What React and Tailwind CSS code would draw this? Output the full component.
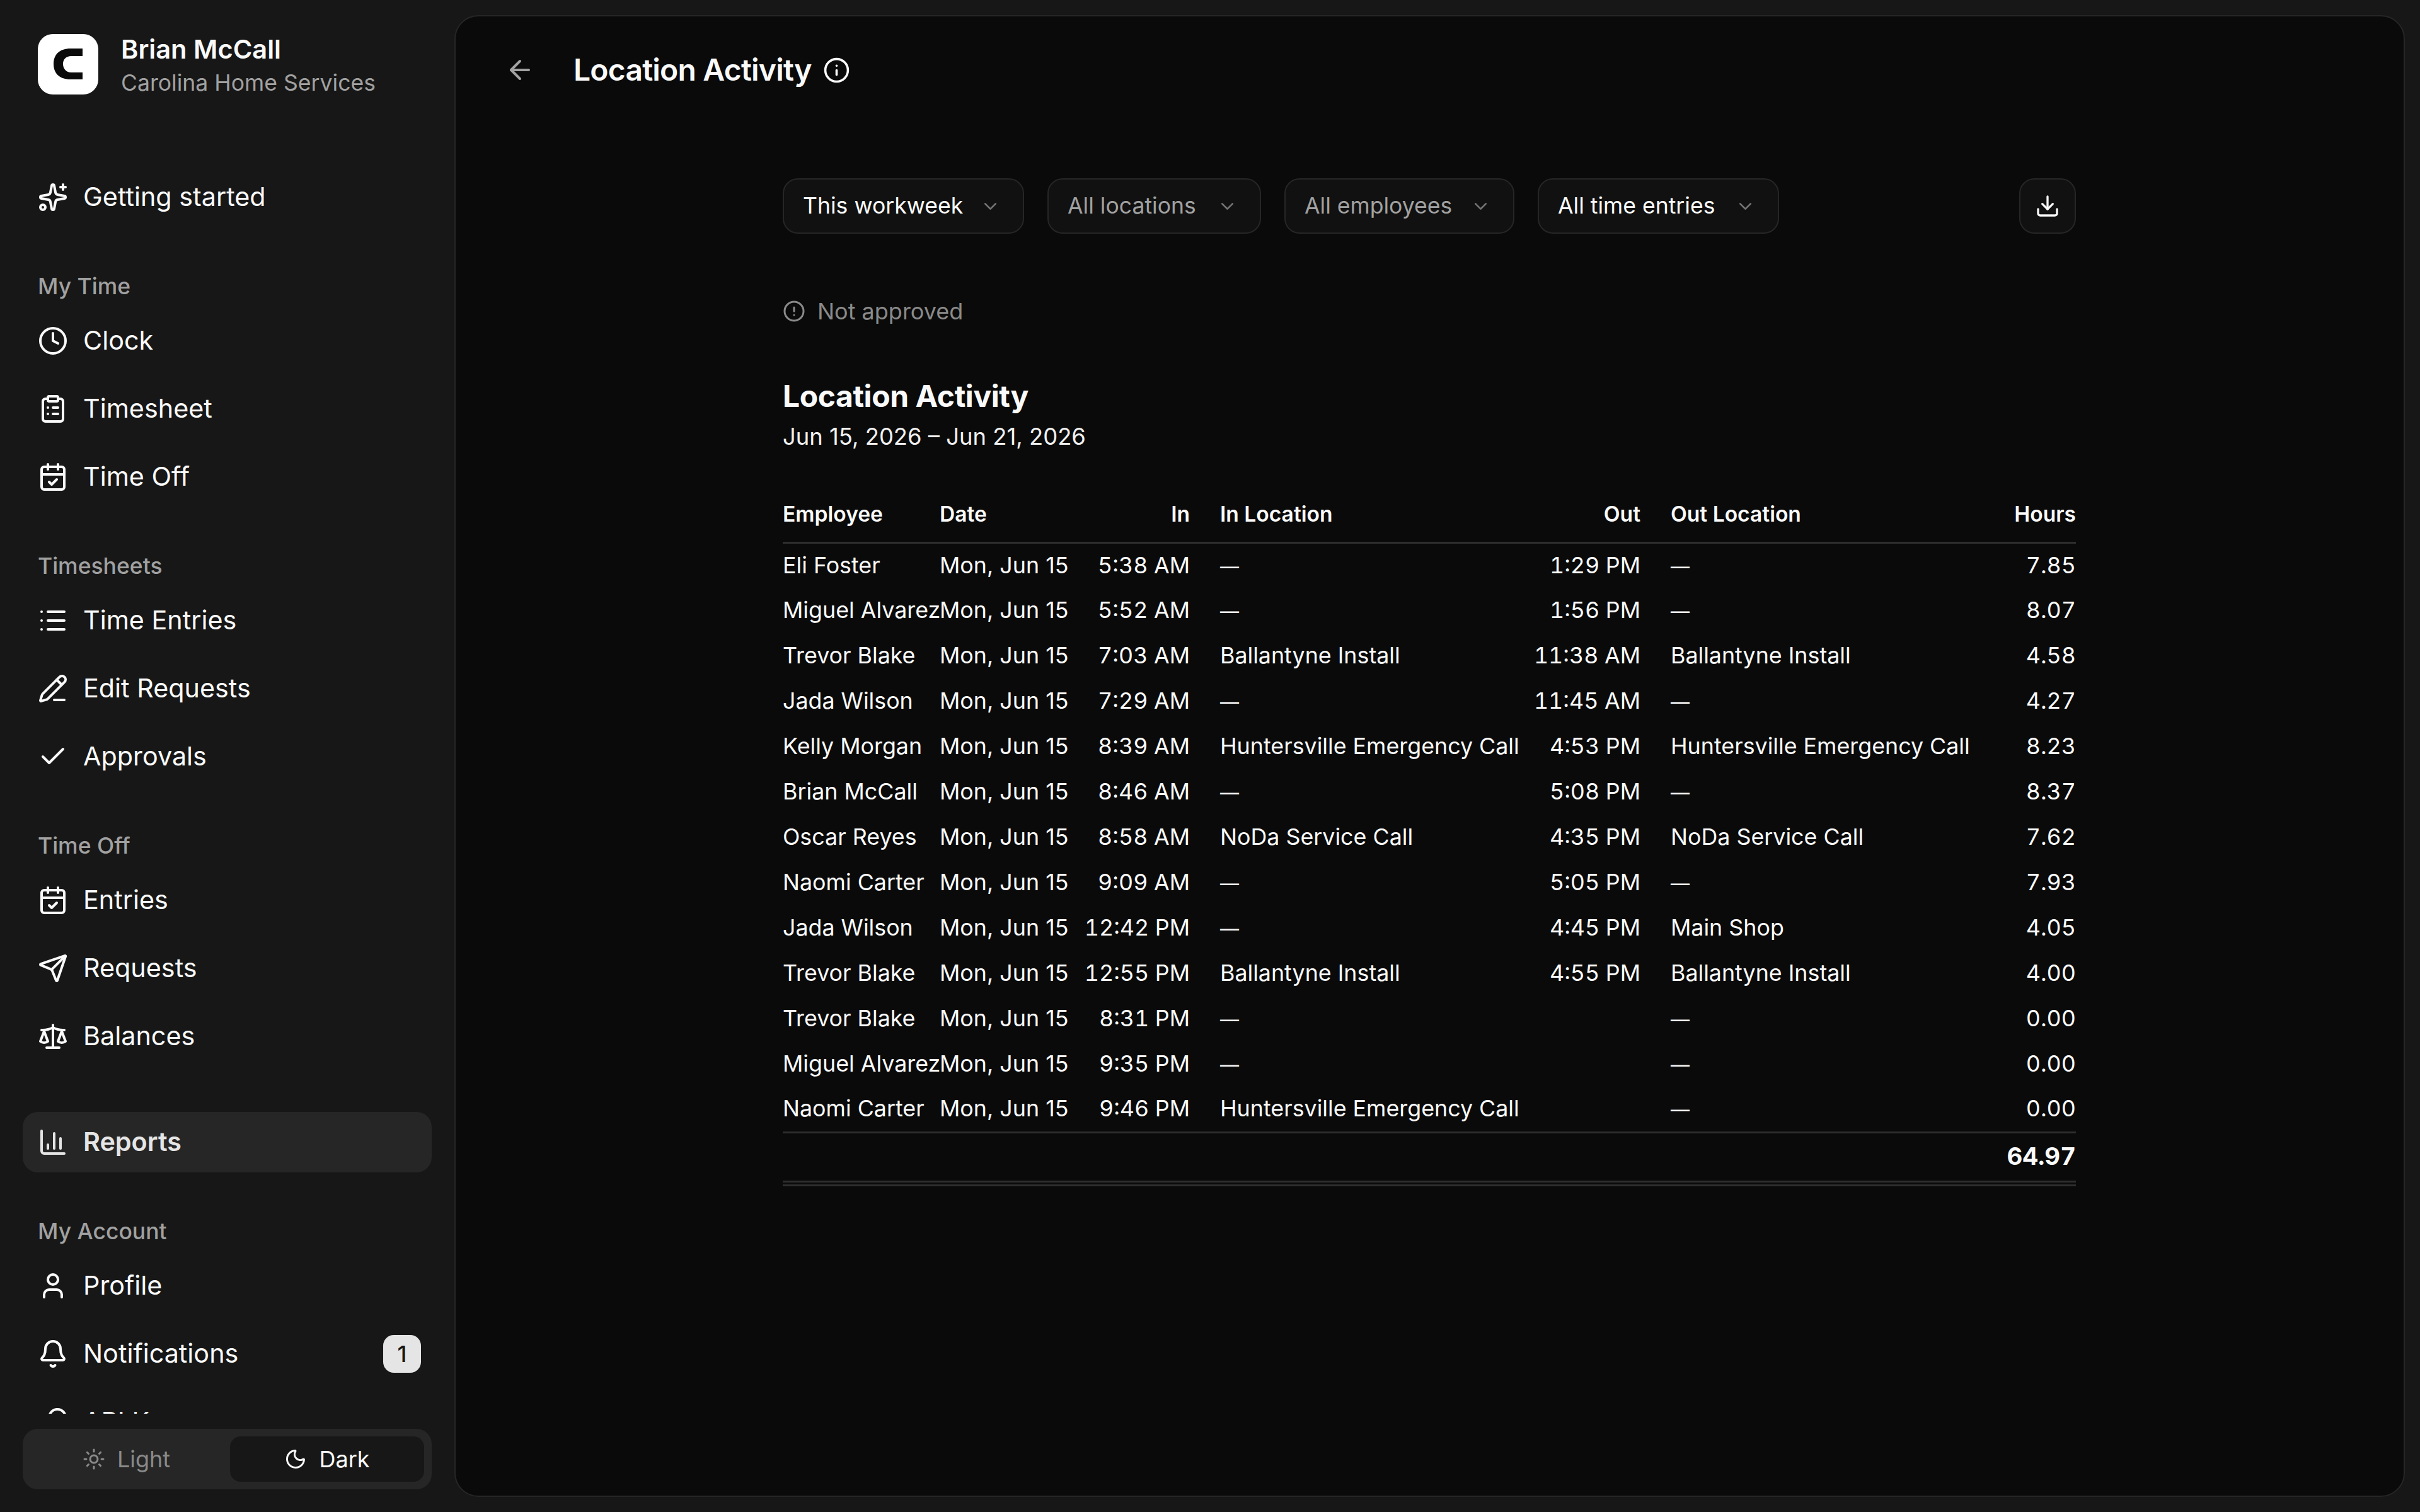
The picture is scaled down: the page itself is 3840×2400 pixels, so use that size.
import {
  ArrowLeft, Bell, CalendarCheck, Check, ChevronDown, CircleAlert, ClipboardList, Clock, Download,
  Info, KeyRound, List, Moon, PencilLine, Scale, Send, Sparkles, Sun, User,
} from 'lucide-react';

const font = 'font-["Inter","Liberation_Sans",sans-serif]';

const rows = [
  ['Eli Foster', '5:38 AM', '—', '1:29 PM', '—', '7.85'],
  ['Miguel Alvarez', '5:52 AM', '—', '1:56 PM', '—', '8.07'],
  ['Trevor Blake', '7:03 AM', 'Ballantyne Install', '11:38 AM', 'Ballantyne Install', '4.58'],
  ['Jada Wilson', '7:29 AM', '—', '11:45 AM', '—', '4.27'],
  ['Kelly Morgan', '8:39 AM', 'Huntersville Emergency Call', '4:53 PM', 'Huntersville Emergency Call', '8.23'],
  ['Brian McCall', '8:46 AM', '—', '5:08 PM', '—', '8.37'],
  ['Oscar Reyes', '8:58 AM', 'NoDa Service Call', '4:35 PM', 'NoDa Service Call', '7.62'],
  ['Naomi Carter', '9:09 AM', '—', '5:05 PM', '—', '7.93'],
  ['Jada Wilson', '12:42 PM', '—', '4:45 PM', 'Main Shop', '4.05'],
  ['Trevor Blake', '12:55 PM', 'Ballantyne Install', '4:55 PM', 'Ballantyne Install', '4.00'],
  ['Trevor Blake', '8:31 PM', '—', '', '—', '0.00'],
  ['Miguel Alvarez', '9:35 PM', '—', '', '—', '0.00'],
  ['Naomi Carter', '9:46 PM', 'Huntersville Emergency Call', '', '—', '0.00'],
];

function ReportsIcon() {
  return (
    <svg viewBox="0 0 24 24" fill="none" stroke="currentColor" strokeWidth="2" strokeLinecap="round" strokeLinejoin="round" className="size-[48px] shrink-0">
      <path d="M3 3v16a2 2 0 0 0 2 2h16" />
      <path d="M8 17v-3" />
      <path d="M13 17V5" />
      <path d="M18 17V9" />
    </svg>
  );
}

function NavItem({ icon: Icon, label, badge }) {
  return (
    <div className="flex h-[96px] items-center gap-[24px] px-[24px] text-[41.3px] text-[#fafafa]">
      <Icon className="size-[48px] shrink-0" />
      <span>{label}</span>
      {badge && (
        <span className="ml-auto -mr-[7px] flex size-[60px] items-center justify-center rounded-[17px] bg-[#e5e5e5] text-[36px] font-medium text-[#171717]">
          {badge}
        </span>
      )}
    </div>
  );
}

function NavGroup({ title, children }) {
  return (
    <div className="mt-[70px]">
      <div className="flex h-[48px] items-center px-[24px] text-[35.5px] font-medium text-[#a1a1a1]">{title}</div>
      <div className="mt-[14px] flex flex-col gap-[12px]">{children}</div>
    </div>
  );
}

function FilterButton({ label, width, muted }) {
  return (
    <button className={`flex h-[88px] items-center justify-between rounded-[24px] border-[2.4px] border-[#262626] bg-[#111111] pl-[30px] pr-[35px] text-[35.6px] ${muted ? 'text-[#a1a1a1]' : 'text-[#fafafa]'} ${width}`}>
      <span>{label}</span>
      <ChevronDown className="size-[33px] text-[#737373]" />
    </button>
  );
}

// the dash for an empty location is narrower than Inter's em dash at body size
function LocationCell({ value }) {
  return (
    <td className="pl-[48px]">
      {value === '—' ? <span className="text-[30px]">—</span> : value}
    </td>
  );
}

export default function App() {
  return (
    <div className={`flex h-[2400px] w-[3840px] overflow-hidden bg-[#171717] ${font}`}>
      {/* sidebar */}
      <aside className="flex h-full w-[721px] shrink-0 flex-col px-[36px] pb-[36px]">
        <div className="flex items-start gap-[36px] px-[24px] pt-[54px]">
          <div className="flex size-[96px] items-center justify-center rounded-[24px] bg-white">
            <svg viewBox="0 0 96 96" className="size-[96px]">
              <path d="M71 23H52C35 23 25 32 25 47.5C25 63 35 72 52 72H71V61H53C45 61 40 55 40 47.5C40 40 45 35 53 35H71Z" fill="#0a0a0a" />
            </svg>
          </div>
          <div className="flex flex-col">
            <span className="text-[41.6px] leading-[48px] font-semibold text-[#fafafa]">Brian McCall</span>
            <span className="mt-[6px] text-[35.6px] leading-[48px] text-[#a1a1a1]">Carolina Home Services</span>
          </div>
        </div>

        <div className="mt-[109px] min-h-0 flex-1 overflow-hidden">
          <NavItem icon={Sparkles} label="Getting started" />
          <NavGroup title="My Time">
            <NavItem icon={Clock} label="Clock" />
            <NavItem icon={ClipboardList} label="Timesheet" />
            <NavItem icon={CalendarCheck} label="Time Off" />
          </NavGroup>
          <NavGroup title="Timesheets">
            <NavItem icon={List} label="Time Entries" />
            <NavItem icon={PencilLine} label="Edit Requests" />
            <NavItem icon={Check} label="Approvals" />
          </NavGroup>
          <NavGroup title="Time Off">
            <NavItem icon={CalendarCheck} label="Entries" />
            <NavItem icon={Send} label="Requests" />
            <NavItem icon={Scale} label="Balances" />
          </NavGroup>
          <div className="mt-[72px] flex h-[96px] items-center gap-[24px] rounded-[24px] bg-[#262626] px-[24px] text-[41.3px] font-semibold text-[#e5e5e5]">
            <ReportsIcon />
            <span>Reports</span>
          </div>
          <NavGroup title="My Account">
            <NavItem icon={User} label="Profile" />
            <NavItem icon={Bell} label="Notifications" badge="1" />
            <NavItem icon={KeyRound} label="API Keys" />
          </NavGroup>
        </div>

        <div className="mt-[24px] flex h-[96px] shrink-0 items-center rounded-[24px] bg-[#262626] p-[12px] text-[36px]">
          <div className="flex h-[72px] flex-1 items-center justify-center gap-[19px] pr-[12px] text-[#8a8a8a]">
            <Sun className="size-[36px]" />
            Light
          </div>
          <div className="flex h-[72px] w-[308px] items-center justify-center gap-[19px] rounded-[17px] bg-[#171717] text-[#fafafa]">
            <Moon className="size-[36px]" />
            Dark
          </div>
        </div>
      </aside>

      {/* main panel */}
      <main className="my-[24px] mr-[24px] flex-1 rounded-[38px] border-[2.4px] border-[#262626] bg-[#0a0a0a]">
        <header className="flex h-[170px] items-center pl-[78px]">
          <ArrowLeft className="size-[48px] text-[#a1a1a1]" />
          <h1 className="ml-[61px] text-[48px] font-semibold tracking-[-0.8px] text-[#fafafa]">Location Activity</h1>
          <Info className="ml-[18px] size-[43px] text-[#fafafa]" />
        </header>

        <div className="ml-[519px] w-[2052px]">
          <div className="mt-[87px] flex items-center gap-[37px]">
            <FilterButton label="This workweek" width="w-[383px]" />
            <FilterButton label="All locations" width="w-[339px]" muted />
            <FilterButton label="All employees" width="w-[365px]" muted />
            <FilterButton label="All time entries" width="w-[383px]" />
            <button className="ml-auto flex h-[88px] w-[90px] items-center justify-center rounded-[24px] border-[2.4px] border-[#262626] bg-[#111111] text-[#fafafa]">
              <Download className="size-[40px]" />
            </button>
          </div>

          <div className="mt-[101px] flex h-[44px] items-center gap-[19px] text-[36px] text-[#8a8a8a]">
            <CircleAlert className="size-[36px]" />
            Not approved
          </div>

          <h2 className="mt-[83px] text-[48px] leading-[60px] font-bold tracking-[-0.43px] text-[#fafafa]">Location Activity</h2>
          <p className="mt-[8px] text-[36.4px] leading-[52px] text-[#f0f0f0]">Jun 15, 2026 – Jun 21, 2026</p>

          <table className="mt-[54px] w-full table-fixed border-collapse text-[35.8px] whitespace-nowrap text-[#fafafa]">
            <colgroup>
              <col className="w-[249px]" />
              <col className="w-[200px]" />
              <col className="w-[197px]" />
              <col className="w-[512px]" />
              <col className="w-[203px]" />
              <col className="w-[497px]" />
              <col className="w-[194px]" />
            </colgroup>
            <thead>
              <tr className="h-[88px] border-b-[3px] border-[#2e2e2e] align-bottom text-[33.6px] font-semibold">
                <th className="pb-[18px] text-left font-semibold">Employee</th>
                <th className="pb-[18px] text-left font-semibold">Date</th>
                <th className="pb-[18px] text-right font-semibold">In</th>
                <th className="pb-[18px] pl-[48px] text-left font-semibold">In Location</th>
                <th className="pb-[18px] text-right font-semibold">Out</th>
                <th className="pb-[18px] pl-[48px] text-left font-semibold">Out Location</th>
                <th className="pb-[18px] text-right font-semibold">Hours</th>
              </tr>
            </thead>
            <tbody>
              {rows.map((r, i) => (
                <tr key={i} className="h-[72px]">
                  <td>{r[0]}</td>
                  <td>Mon, Jun 15</td>
                  <td className="text-right tabular-nums">{r[1]}</td>
                  <LocationCell value={r[2]} />
                  <td className="text-right tabular-nums">{r[3]}</td>
                  <LocationCell value={r[4]} />
                  <td className="text-right tabular-nums">{r[5]}</td>
                </tr>
              ))}
            </tbody>
            <tfoot>
              <tr className="h-[78px] border-y-[3px] border-[#2e2e2e]">
                <td colSpan={6} />
                <td className="text-right text-[38.4px] font-bold tabular-nums">64.97</td>
              </tr>
            </tfoot>
          </table>
          <div className="mt-[3px] h-[3px] bg-[#2e2e2e]" />
        </div>
      </main>
    </div>
  );
}
